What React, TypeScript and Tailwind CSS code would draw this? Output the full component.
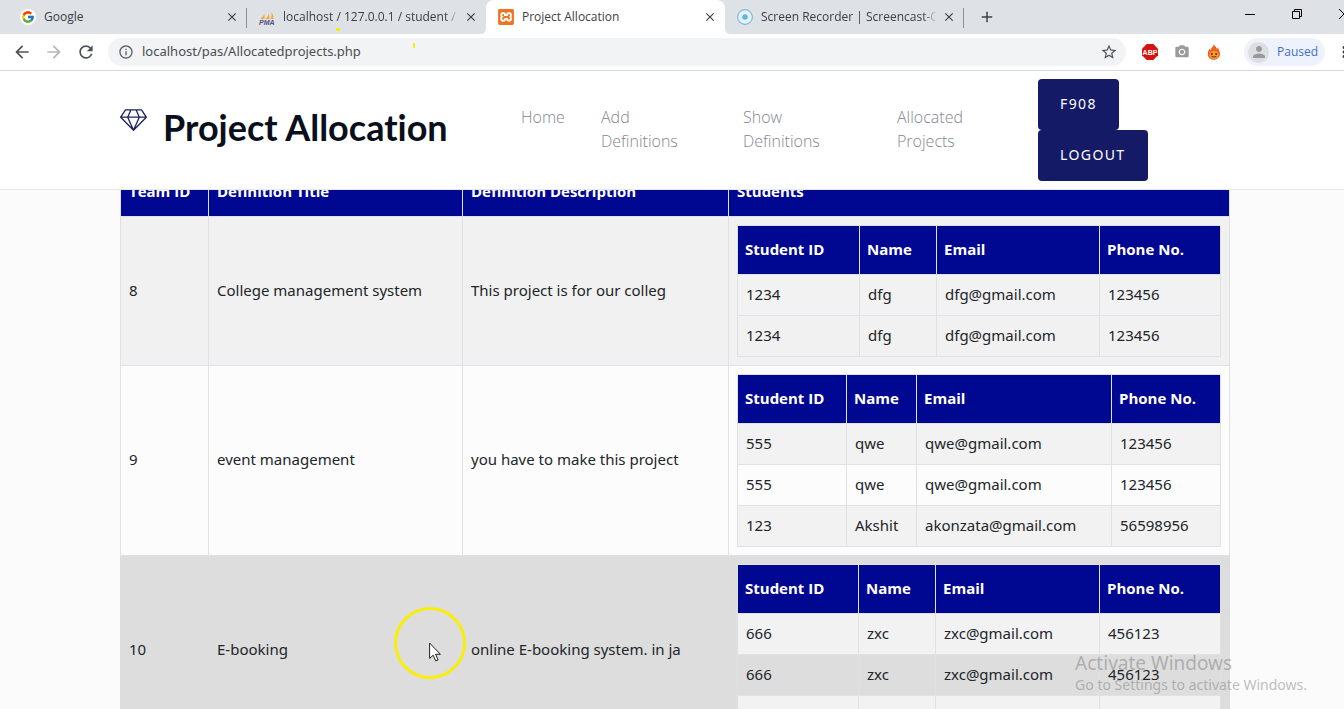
import type { ReactNode } from "react";
import { FcGoogle } from "react-icons/fc";
import { SiXampp } from "react-icons/si";
import {
  MdAdd,
  MdArrowBack,
  MdArrowForward,
  MdClose,
  MdInfoOutline,
  MdMoreVert,
  MdPerson,
  MdPhotoCamera,
  MdRefresh,
  MdStarBorder,
} from "react-icons/md";

type Student = { id: string; name: string; email: string; phone: string };

type Allocation = {
  teamId: string;
  title: string;
  description: string;
  rowClass: string;
  cellClass: string;
  columns: string[];
  students: Student[];
};

const allocations: Allocation[] = [
  {
    teamId: "8",
    title: "College management system",
    description: "This project is for our colleg",
    rowClass: "bg-[#f1f1f1]",
    cellClass: "border-[#dee2e6]",
    columns: ["w-[122px]", "w-[77px]", "w-[163px]", "w-auto"],
    students: [
      { id: "1234", name: "dfg", email: "dfg@gmail.com", phone: "123456" },
      { id: "1234", name: "dfg", email: "dfg@gmail.com", phone: "123456" },
    ],
  },
  {
    teamId: "9",
    title: "event management",
    description: "you have to make this project",
    rowClass: "bg-[#fcfcfc]",
    cellClass: "border-[#dee2e6]",
    columns: ["w-[109px]", "w-[70px]", "w-[195px]", "w-auto"],
    students: [
      { id: "555", name: "qwe", email: "qwe@gmail.com", phone: "123456" },
      { id: "555", name: "qwe", email: "qwe@gmail.com", phone: "123456" },
      { id: "123", name: "Akshit", email: "akonzata@gmail.com", phone: "56598956" },
    ],
  },
  {
    teamId: "10",
    title: "E-booking",
    description: "online E-booking system. in ja",
    rowClass: "bg-[#dddddd]",
    cellClass: "border-[#dddddd]",
    columns: ["w-[121px]", "w-[77px]", "w-[164px]", "w-auto"],
    students: [
      { id: "666", name: "zxc", email: "zxc@gmail.com", phone: "456123" },
      { id: "666", name: "zxc", email: "zxc@gmail.com", phone: "456123" },
      { id: "666", name: "zxc", email: "zxc@gmail.com", phone: "456123" },
    ],
  },
];

function PmaIcon() {
  return (
    <svg viewBox="0 0 16 16" className="size-4">
      <path d="M5.500 1.500C6 5 4.500 8 1 10h4.500zM9.500.5c1 4-.5 7.500-3 9.500h4zM12.500 3c1.500 2.500 2 5 2 7h-3c1-2 1.200-4.500 1-7z" fill="#f8a530" />
      <text x="0" y="15.500" fontSize="7" fontWeight="700" fontStyle="italic" fontFamily="Liberation Sans, sans-serif" fill="#4d5182">
        PMA
      </text>
    </svg>
  );
}

function RecorderIcon() {
  return (
    <svg viewBox="0 0 16 16" className="size-4" fill="none" stroke="#74bde3">
      <circle cx="8" cy="8" r="7.400" strokeWidth="1.100" fill="#e8f0f6" />
      <circle cx="8" cy="8" r="2.700" fill="#5fb4e5" stroke="none" />
    </svg>
  );
}

function AdblockIcon() {
  return (
    <svg viewBox="0 0 16 16" className="size-4">
      <path d="M4.700 0h6.600L16 4.700v6.600L11.300 16H4.700L0 11.300V4.700z" fill="#d3140f" />
      <text x="8" y="10.500" textAnchor="middle" fontSize="7" fontWeight="700" fontFamily="Liberation Sans, sans-serif" fill="#fff">
        ABP
      </text>
    </svg>
  );
}

function FlameIcon() {
  return (
    <svg viewBox="0 0 16 16" className="size-4">
      <path d="M7.800 0c.3 1.800 2.700 2.700 3.300 5l1-1.800c.3 1.800 1.900 3.800 1.900 6.600 0 3.600-2.700 6-6 6s-6.200-2.300-6.200-5.900c0-2 .9-3.400 1.300-5.200l1.600 1.500C4.700 3.800 7.600 2.800 7.800 0z" fill="#ec6420" />
      <ellipse cx="8" cy="11" rx="4.600" ry="4" fill="#fb9b2c" />
      <circle cx="5.900" cy="10" r=".9" fill="#4b2010" />
      <circle cx="10.100" cy="10" r=".9" fill="#4b2010" />
      <path d="M5.500 12.200q2.500 2 5 0" stroke="#6b2d12" fill="none" />
    </svg>
  );
}

function DiamondIcon() {
  return (
    <svg viewBox="0 0 27 22" className="h-[22px] w-[27px] shrink-0" fill="none" stroke="#1b2162" strokeWidth="1.300" strokeLinejoin="round">
      <path d="M5.500.8h16l4.800 7.400L13.500 21.300.7 8.200zM.7 8.200h25.600M11 .8 7.700 8.200l5.800 13.100 5.800-13.100L16 .8" />
    </svg>
  );
}

function Tab({ icon, title, active = false, divider = false }: { icon: ReactNode; title: string; active?: boolean; divider?: boolean }) {
  return (
    <div className={active ? "relative flex h-full w-[239px] shrink-0 items-center rounded-t-lg bg-white pr-[7px] pl-3" : "relative flex h-full w-[239px] shrink-0 items-center pr-[7px] pl-3"}>
      {icon}
      <span className={title.length > 20 ? "ml-2 flex-1 overflow-hidden mask-r-from-92% whitespace-nowrap" : "ml-2 flex-1 overflow-hidden whitespace-nowrap"}>{title}</span>
      <button aria-label={"Close " + title} className="ml-1 flex size-4 items-center justify-center text-[#3c4043]">
        <MdClose className="size-3.5" />
      </button>
      {divider && <span className="absolute top-2 right-0 h-5 w-px bg-[#8b8f94]" />}
      {active && (
        <>
          <svg viewBox="0 0 6 6" className="absolute bottom-0 -left-1.5 size-1.5"><path d="M6 0v6H0q6 0 6-6z" fill="#fff" /></svg>
          <svg viewBox="0 0 6 6" className="absolute -right-1.5 bottom-0 size-1.5"><path d="M0 0v6h6Q0 6 0 0z" fill="#fff" /></svg>
        </>
      )}
    </div>
  );
}

function BrowserChrome() {
  return (
    <div className="shrink-0 border-b border-[#d5d7da] bg-white font-['Open_Sans','Noto_Sans',sans-serif] text-[#3c4043]">
      <div className="flex h-[34px] items-center overflow-hidden bg-[#dee1e6] pl-2 text-xs">
        <Tab icon={<span className="flex size-4 items-center justify-center rounded-full bg-white"><FcGoogle className="size-3.5" /></span>} title="Google" divider />
        <Tab icon={<PmaIcon />} title="localhost / 127.0.0.1 / student / stud" />
        <Tab icon={<span className="flex size-4 items-center justify-center rounded-xs bg-white"><SiXampp className="size-4 text-[#ee7421]" /></span>} title="Project Allocation" active />
        <Tab icon={<RecorderIcon />} title="Screen Recorder | Screencast-O-Matic" divider />
        <button aria-label="New tab" className="ml-3.5 shrink-0"><MdAdd className="size-[18px]" /></button>
        <div className="-mr-1.5 ml-auto flex h-full shrink-0 items-start gap-[35px] pt-2 text-black">
          <button aria-label="Minimize">
            <svg viewBox="0 0 12 12" className="size-3" stroke="currentColor"><path d="M1 6.500h10" /></svg>
          </button>
          <button aria-label="Restore">
            <svg viewBox="0 0 12 12" className="size-3" fill="none" stroke="currentColor"><path d="M1.500 3.500h7v7h-7zM3.500 3.500v-2h7v7h-2" /></svg>
          </button>
          <button aria-label="Close">
            <svg viewBox="0 0 12 12" className="size-3" stroke="currentColor"><path d="m1 1 10 10M11 1 1 11" /></svg>
          </button>
        </div>
      </div>
      <div className="flex h-9 items-center overflow-hidden pl-3">
        <button aria-label="Back" className="mr-3 text-[#4f5357]"><MdArrowBack className="size-5" /></button>
        <button aria-label="Forward" className="mr-3 text-[#b4b6b8]"><MdArrowForward className="size-5" /></button>
        <button aria-label="Reload" className="mr-3 text-[#4f5357]"><MdRefresh className="size-5" /></button>
        <div className="flex h-7 flex-1 items-center rounded-full bg-[#f1f3f4] px-2">
          <MdInfoOutline className="mx-0.5 size-4 shrink-0 text-[#5f6368]" />
          <input aria-label="Address" defaultValue="localhost/pas/Allocatedprojects.php" className="ml-1.5 flex-1 bg-transparent font-['Noto_Sans',sans-serif] text-[13px] text-[#4a4e52] outline-none" />
          <button aria-label="Bookmark"><MdStarBorder className="size-[18px] text-[#4f5357]" /></button>
        </div>
        <div className="flex w-[218px] shrink-0 items-center pl-4">
          <button aria-label="Ad blocker"><AdblockIcon /></button>
          <button aria-label="Screenshot" className="ml-4"><MdPhotoCamera className="size-4 text-[#9a9a9a]" /></button>
          <button aria-label="Flame" className="ml-4"><FlameIcon /></button>
          <span className="ml-3.5 h-4 w-px bg-[#c9ccd0]" />
          <button className="ml-2 flex h-7 w-[81px] shrink-0 items-center gap-2 rounded-full bg-[#edf2fc] pl-1 text-xs text-[#3f6fc4]">
            <span className="flex size-[21px] items-center justify-center rounded-full bg-[#dcdee1]"><MdPerson className="size-[18px] text-[#97999c]" /></span>
            Paused
          </button>
          <button aria-label="Menu" className="ml-2.5 shrink-0"><MdMoreVert className="size-[18px]" /></button>
        </div>
      </div>
    </div>
  );
}

function SiteHeader() {
  return (
    <header className="relative z-10 flex h-[119px] shrink-0 items-start border-b border-[#e6e8ea] bg-white pt-2 pl-[120px]">
      <a href="#home" className="flex w-[401px] items-start pt-[30px]">
        <DiamondIcon />
        <span className="ml-4 font-['Lato',sans-serif] text-4xl leading-9 font-bold whitespace-nowrap text-[#0a0f1c] [font-variant-ligatures:none]">Project Allocation</span>
      </a>
      <nav className="flex pt-[26px] font-['Open_Sans',sans-serif] text-base leading-6 font-light text-[#83868e]">
        <a href="#home" className="w-20">Home</a>
        <a href="#add" className="w-[142px] pr-12">Add Definitions</a>
        <a href="#show" className="w-[154px] pr-12">Show Definitions</a>
        <a href="#allocated" className="w-[141px] pr-12">Allocated Projects</a>
      </nav>
      <div className="flex flex-col items-start font-['Noto_Sans',sans-serif] text-sm tracking-widest text-white">
        <button className="h-[51px] rounded bg-[#141a66] px-[22px] pb-0.5">F908</button>
        <button className="h-[51px] rounded bg-[#141a66] px-[22px] pb-0.5">LOGOUT</button>
      </div>
    </header>
  );
}

function StudentTable({ columns, students }: { columns: string[]; students: Student[] }) {
  return (
    <table className="w-full table-fixed border-collapse">
      <colgroup>
        {columns.map((width, i) => <col key={i} className={width} />)}
      </colgroup>
      <thead>
        <tr className="bg-[#000790] text-left text-white">
          {["Student ID", "Name", "Email", "Phone No."].map((label) => (
            <th key={label} className="border border-[#dee2e6] px-[7px] pt-[11px] pb-[13px] font-['Open_Sans',sans-serif] font-bold">{label}</th>
          ))}
        </tr>
      </thead>
      <tbody>
        {students.map((student, i) => (
          <tr key={i} className="odd:bg-[#f2f2f2]">
            {[student.id, student.name, student.email, student.phone].map((value, j) => (
              <td key={j} className="border border-[#dee2e6] px-2 pt-[7px] pb-[9px]">{value}</td>
            ))}
          </tr>
        ))}
      </tbody>
    </table>
  );
}

function AllocationTable() {
  return (
    <table className="-mt-[23px] w-full table-fixed border-collapse font-['Noto_Sans',sans-serif] text-[15px] leading-6 text-[#212529]">
      <colgroup>
        <col className="w-[88px]" />
        <col className="w-[254px]" />
        <col className="w-[266px]" />
        <col />
      </colgroup>
      <thead>
        <tr className="bg-[#000790] text-left text-white">
          {["Team ID", "Definition Title", "Definition Description", "Students"].map((label) => (
            <th key={label} className="border border-[#dee2e6] px-2 pt-[11px] pb-[13px] font-['Open_Sans',sans-serif] font-bold whitespace-nowrap">{label}</th>
          ))}
        </tr>
      </thead>
      <tbody>
        {allocations.map((row) => (
          <tr key={row.teamId} className={row.rowClass}>
            {[row.teamId, row.title, row.description].map((value) => (
              <td key={value} className={"border px-2 pb-[3px] " + row.cellClass}>{value}</td>
            ))}
            <td className={"border p-2 " + row.cellClass}>
              <StudentTable columns={row.columns} students={row.students} />
            </td>
          </tr>
        ))}
      </tbody>
    </table>
  );
}

function PointerHighlight() {
  return (
    <div className="pointer-events-none absolute top-[607px] left-[394px] z-20 size-[72px] rounded-full border-[3px] border-[#f8ee08]">
      <svg viewBox="0 0 13 20" className="absolute top-8 left-8 h-5 w-[13px]">
        <path d="M.6 1v15.500l3.600-3.300 2.500 5.700 2.400-1-2.500-5.600h4.800z" fill="#fff" stroke="#222" strokeWidth="1" />
      </svg>
    </div>
  );
}

export default function App() {
  return (
    <div className="relative flex h-screen flex-col overflow-hidden bg-[#fbfbfb]">
      <BrowserChrome />
      <SiteHeader />
      <main className="min-h-0 flex-1 pr-[114px] pl-[120px]">
        <AllocationTable />
      </main>
      <PointerHighlight />
      <span className="absolute top-7 left-[336px] h-[3px] w-1 bg-[#f4ee16]" />
      <span className="absolute top-[43px] left-[413px] h-[5px] w-0.5 bg-[#f4ee16]" />
      <div className="pointer-events-none absolute right-[37px] bottom-3.5 z-20 font-['Noto_Sans',sans-serif] text-[#7d7d7d]/50">
        <p className="text-[19px] leading-6">Activate Windows</p>
        <p className="text-sm leading-5">Go to Settings to activate Windows.</p>
      </div>
    </div>
  );
}
